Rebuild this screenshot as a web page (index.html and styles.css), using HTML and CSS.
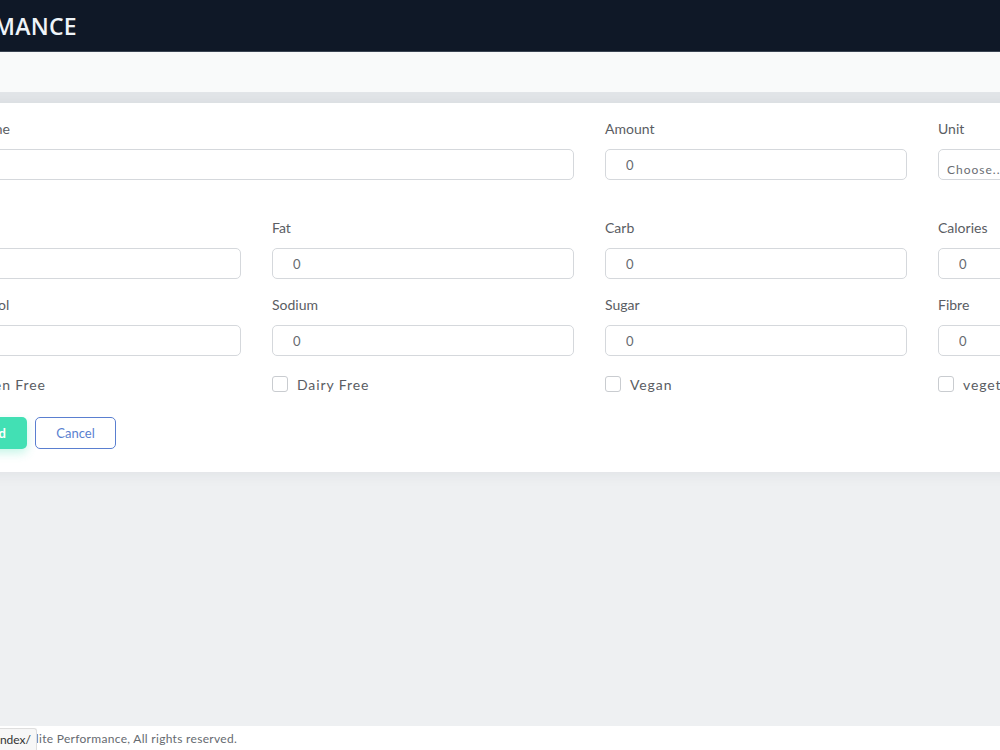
FILE: index.html
```html
<!DOCTYPE html>
<html lang="en">
<head>
	<meta charset="UTF-8">
	<meta name="viewport" content="width=device-width, initial-scale=1.0">
	<title>Add Food - Elite Performance</title>
	<link rel="stylesheet" href="styles.css">
</head>
<body>
	<header class="topbar">
		<div class="brand-wrap">
			<span class="brand">ELITE PERFORMANCE</span>
		</div>
	</header>
	<div class="subbar"></div>

	<main class="content">
		<form class="card">
			<div class="form-row row-first">
				<div class="field span-2">
					<label for="name">Food Name</label>
					<input class="input" type="text" id="name">
				</div>
				<div class="field">
					<label for="amount">Amount</label>
					<input class="input" type="text" id="amount" value="0">
				</div>
				<div class="field">
					<label for="unit">Unit</label>
					<select class="input select" id="unit">
						<option>Choose...</option>
					</select>
				</div>
			</div>

			<div class="form-row row-mid">
				<div class="field">
					<label for="protein">Protein</label>
					<input class="input" type="text" id="protein" value="0">
				</div>
				<div class="field">
					<label for="fat">Fat</label>
					<input class="input" type="text" id="fat" value="0">
				</div>
				<div class="field">
					<label for="carb">Carb</label>
					<input class="input" type="text" id="carb" value="0">
				</div>
				<div class="field">
					<label for="calories">Calories</label>
					<input class="input" type="text" id="calories" value="0">
				</div>
			</div>

			<div class="form-row row-last">
				<div class="field">
					<label for="cholesterol">Cholesterol</label>
					<input class="input" type="text" id="cholesterol" value="0">
				</div>
				<div class="field">
					<label for="sodium">Sodium</label>
					<input class="input" type="text" id="sodium" value="0">
				</div>
				<div class="field">
					<label for="sugar">Sugar</label>
					<input class="input" type="text" id="sugar" value="0">
				</div>
				<div class="field">
					<label for="fibre">Fibre</label>
					<input class="input" type="text" id="fibre" value="0">
				</div>
			</div>

			<div class="form-row row-checks">
				<label class="check"><span class="box"></span>Gluten Free</label>
				<label class="check"><span class="box"></span>Dairy Free</label>
				<label class="check"><span class="box"></span>Vegan</label>
				<label class="check"><span class="box"></span>vegetarian</label>
			</div>

			<div class="actions">
				<button class="btn btn-add" type="button">Add Food</button>
				<button class="btn btn-cancel" type="button">Cancel</button>
			</div>
		</form>
	</main>

	<footer class="footer">
		<span>&copy; Elite Performance, All rights reserved.</span>
	</footer>

	<div class="status-link"><span>http://127.0.0.1:8000/index/</span></div>
</body>
</html>
```

FILE: styles.css
```css
body
{
	margin: 0;
	font-family: Lato, "Noto Sans", sans-serif;
	font-size: 14px;
	color: #5c5f66;
	background-color: #eef0f2;
	overflow: hidden;
	height: 750px;
	display: flex;
	flex-direction: column;
}

.topbar
{
	height: 52px;
	background-color: #0f1827;
	border-bottom: 1px solid #3b4452;
	box-sizing: border-box;
	display: flex;
	align-items: center;
}

.brand-wrap
{
	width: 77px;
	display: flex;
	justify-content: flex-end;
	flex-shrink: 0;
}

.brand
{
	white-space: nowrap;
	color: #eef3f8;
	font-family: "Open Sans", sans-serif;
	font-size: 23px;
	font-weight: 600;
	letter-spacing: 0.3px;
}

.subbar
{
	height: 40px;
	background-color: #f9fafa;
	border-bottom: 11px solid #e2e5e8;
}

.content
{
	flex: 1;
}

.card
{
	margin-left: -81px;
	width: 1380px;
	background-color: #ffffff;
	padding: 16px 20px 23px 20px;
	box-shadow: 0 2px 14px rgba(30, 40, 60, 0.07);
}

.form-row
{
	display: grid;
	grid-template-columns: repeat(4, 302px);
	column-gap: 31px;
}

.row-first { margin-bottom: 38px; }
.row-mid { margin-bottom: 16px; }
.row-last { margin-bottom: 20px; }
.row-checks { margin-bottom: 25px; }

.span-2 { grid-column: span 2; }

.field label
{
	display: block;
	line-height: 20px;
	margin-bottom: 10px;
	color: #5a5d63;
}

.input
{
	display: block;
	box-sizing: border-box;
	width: 100%;
	height: 31px;
	border: 1px solid #d5d8dc;
	border-radius: 5px;
	padding: 0 20px;
	font-family: inherit;
	font-size: 13px;
	color: #666a70;
	background-color: #ffffff;
	outline: none;
}

.select
{
	appearance: none;
	padding: 10px 8px 0 8px;
	font-size: 12px;
	letter-spacing: 1px;
	color: #6a6d73;
}

.check
{
	display: flex;
	align-items: center;
	height: 16px;
	letter-spacing: 0.9px;
	color: #5a5d63;
}

.box
{
	width: 14px;
	height: 14px;
	border: 1px solid #c9ccd0;
	border-radius: 3px;
	margin-right: 9px;
}

.actions
{
	display: flex;
	gap: 8px;
}

.btn
{
	height: 32px;
	border-radius: 5px;
	font-family: inherit;
	font-size: 13px;
	cursor: pointer;
	box-sizing: border-box;
}

.btn-add
{
	width: 88px;
	padding: 0 10px 0 0;
	border: 0;
	background-color: #42e0b4;
	color: #ffffff;
	font-weight: 700;
	box-shadow: 0 4px 10px rgba(66, 224, 180, 0.3);
}

.btn-cancel
{
	width: 81px;
	border: 1px solid #5a7fd0;
	background-color: #ffffff;
	color: #5a7fd0;
}

.footer
{
	height: 24px;
	background-color: #ffffff;
	display: flex;
	align-items: center;
	padding-left: 15px;
	font-size: 12px;
	letter-spacing: 0.3px;
	color: #666a70;
}

.status-link
{
	position: absolute;
	left: 0;
	bottom: 0;
	width: 37px;
	height: 22px;
	box-sizing: border-box;
	padding-right: 5px;
	background-color: #f7f7f7;
	border-top: 1px solid #dedede;
	border-right: 1px solid #dedede;
	border-top-right-radius: 3px;
	display: flex;
	justify-content: flex-end;
	align-items: center;
	overflow: hidden;
	font-size: 12px;
	color: #333333;
	white-space: nowrap;
}
```
